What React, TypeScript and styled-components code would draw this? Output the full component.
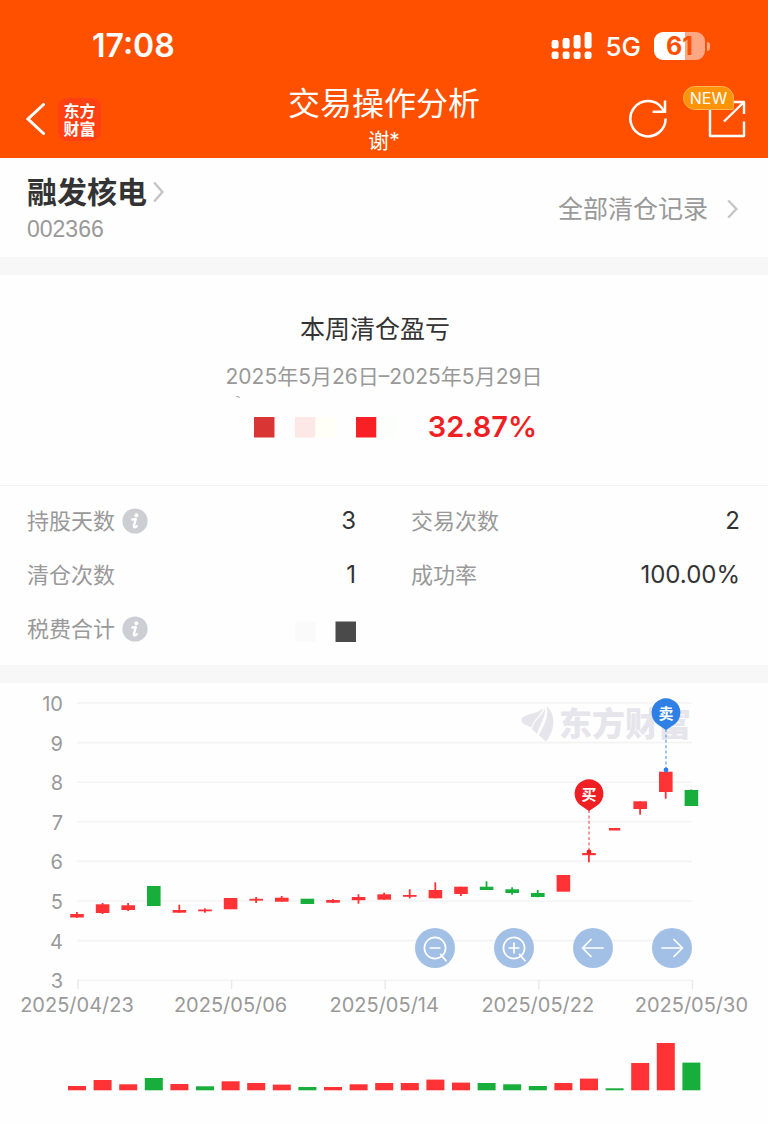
import React from "react";
import styled, { createGlobalStyle } from "styled-components";

const RED = "#ff3336";
const GREEN = "#17ae3c";
const ORANGE = "#ff5000";

const GlobalStyle = createGlobalStyle`
  *, *::before, *::after { box-sizing: border-box; }
  body {
    margin: 0;
    background: #fefefe;
    color: #333;
    font-family: Inter, "Noto Sans CJK SC", sans-serif;
  }
  button { border: 0; padding: 0; background: none; color: inherit; font: inherit; cursor: pointer; }
  a { color: inherit; text-decoration: none; }
  h1, h2, p, dl, dd, dt { margin: 0; font-weight: 400; }
  svg { display: block; }
`;

const Header = styled.header`
  background: ${ORANGE};
  color: #fff;
`;

const StatusBar = styled.div`
  display: flex;
  align-items: center;
  justify-content: space-between;
  height: 84px;
  padding: 8px 58px 0 92px;
`;

const Clock = styled.span`
  font-size: 32px;
  font-weight: 600;
  line-height: 40px;
`;

const StatusIcons = styled.div`
  display: flex;
  align-items: center;
`;

const Network = styled.span`
  margin: 2px 13px 0 13px;
  font-size: 26px;
  font-weight: 500;
  line-height: 32px;
`;

const Battery = styled.span`
  display: flex;
  align-items: center;
  justify-content: center;
  width: 51px;
  height: 28px;
  border-radius: 9px;
  background: linear-gradient(90deg, #fff 31px, #ffa683 31px);
  color: ${ORANGE};
  font-size: 25px;
  font-weight: 700;
  line-height: 28px;
`;

const BatteryCap = styled.span`
  width: 3px;
  height: 9px;
  margin-left: 2px;
  border-radius: 0 4px 4px 0;
  background: #ffa683;
`;

const NavBar = styled.nav`
  display: grid;
  grid-template-columns: 1fr auto 1fr;
  height: 74px;
`;

const NavSide = styled.div<{ $end?: boolean }>`
  display: flex;
  align-items: center;
  justify-content: ${(p) => (p.$end ? "flex-end" : "flex-start")};
  gap: ${(p) => (p.$end ? "40px" : "12px")};
  height: 70px;
  padding: ${(p) => (p.$end ? "0 22px 0 0" : "0 0 0 26px")};
`;

const Brand = styled.span`
  display: grid;
  place-content: center;
  width: 43px;
  height: 43px;
  border-radius: 9px;
  background: #ff4012;
  font-family: "Noto Sans CJK SC", sans-serif;
  font-size: 16px;
  font-weight: 700;
  line-height: 18px;
`;

const TitleBlock = styled.div`
  text-align: center;
`;

const Title = styled.h1`
  font-size: 32px;
  line-height: 40px;
`;

const Subtitle = styled.p`
  font-size: 21px;
  line-height: 34px;
`;

const ShareButton = styled.button`
  position: relative;
`;

const NewBadge = styled.span`
  position: absolute;
  left: -25px;
  top: -14px;
  width: 51px;
  height: 24px;
  border: 1px solid #ffb355;
  border-radius: 12px 12px 2px 12px;
  background: #ff9409;
  font-size: 16px;
  line-height: 22px;
  text-align: center;
`;

const StockBar = styled.section`
  display: flex;
  align-items: center;
  justify-content: space-between;
  height: 99px;
  padding: 2px 30px 0 27px;
`;

const StockName = styled.h2`
  font-size: 30px;
  line-height: 40px;
`;

const StockLink = styled.a`
  display: flex;
  align-items: center;
  gap: 6px;
  font-weight: 700;
`;

const StockCode = styled.p`
  color: #999;
  font-family: "Liberation Sans", sans-serif;
  font-size: 23px;
  line-height: 34px;
`;

const RecordsLink = styled.a`
  display: flex;
  align-items: center;
  gap: 19px;
  color: #999;
  font-size: 25px;
  line-height: 36px;
`;

const Band = styled.div`
  height: 18px;
  background: #f7f7f7;
`;

const Summary = styled.section`
  display: flex;
  flex-direction: column;
  align-items: center;
  height: 210px;
  padding-top: 36px;
`;

const SummaryTitle = styled.h2`
  padding-right: 18px;
  font-size: 25px;
  line-height: 36px;
`;

const Period = styled.p`
  margin-top: 12px;
  color: #999;
  font-size: 21px;
  line-height: 36px;
`;

const ProfitRow = styled.div`
  display: flex;
  align-items: center;
  height: 40px;
  margin-top: 12px;
  padding-left: 4px;
`;

const Percent = styled.strong`
  color: #f01f24;
  font-size: 29px;
  font-weight: 600;
  line-height: 40px;
`;

const Stats = styled.dl`
  display: grid;
  grid-template-columns: 1fr 1fr;
  padding: 8px 0 9px;
  border-top: 1px solid #f2f2f2;
`;

const Stat = styled.div`
  display: flex;
  align-items: center;
  justify-content: space-between;
  height: 54px;
  padding: 0 28px 0 27px;
`;

const StatLabel = styled.dt`
  display: flex;
  align-items: center;
  gap: 7px;
  color: #999;
  font-size: 22px;
  line-height: 32px;
`;

const StatValue = styled.dd`
  font-size: 24px;
  line-height: 32px;
`;

const ChartSection = styled.section`
  position: relative;
`;

const Chart = styled.svg`
  width: 100%;
  height: auto;
`;

const AxisText = styled.text`
  fill: #999;
  font-size: 20px;
`;

const WatermarkText = styled.text`
  fill: #e6e5eb;
  font-family: "Noto Sans CJK SC", sans-serif;
  font-size: 33px;
  font-weight: 900;
`;

const PinText = styled.text`
  fill: #fff;
  font-family: "Noto Sans CJK SC", sans-serif;
  font-size: 15px;
  font-weight: 700;
`;

const ChartControls = styled.div`
  position: absolute;
  top: 55.5%;
  right: 9.9%;
  display: flex;
  gap: 39px;
`;

const RoundButton = styled.button`
  display: grid;
  place-items: center;
  width: 40px;
  height: 40px;
  border-radius: 50%;
  background: rgba(152, 185, 226, 0.9);
`;

const Chevron = ({ height = 22 }: { height?: number }) => (
  <svg width="11" height={height} viewBox="0 0 11 22" preserveAspectRatio="none" fill="none" stroke="#c4c4c4" strokeWidth="2.4" aria-hidden="true">
    <path d="M1.2 1.5L9.4 11L1.2 20.5" />
  </svg>
);

const InfoIcon = () => (
  <svg width="26" height="26" viewBox="0 0 26 26" fill="none">
    <circle cx="13" cy="13" r="12.6" fill="#cdced4" />
    <circle cx="14.4" cy="7.2" r="2" fill="#fff" />
    <path d="M10.2 11.6L13.8 11L11.9 18Q11.6 20.4 14.8 18.2" stroke="#fff" strokeWidth="2.3" strokeLinejoin="round" strokeLinecap="round" />
  </svg>
);

const SignalIcon = () => (
  <svg width="41" height="28" viewBox="0 0 41 28" fill="#fff" aria-hidden="true">
    {[8, 6, 3, 0].map((top, i) => (
      <g key={top}>
        <rect x={i * 11 + 0.6} y={top} width="7" height={16.5 - top} rx="2.2" />
        <rect x={i * 11 + 0.6} y="19.6" width="7" height="7.4" rx="2.2" />
      </g>
    ))}
  </svg>
);

type Candle = { up: boolean; body: [number, number]; wick?: [number, number]; volume: number };

const candles: Candle[] = [
  { up: true, body: [231, 234.5], wick: [229, 235], volume: 4.3 },
  { up: true, body: [221.3, 230], wick: [220, 231], volume: 10.3 },
  { up: true, body: [222.3, 227], wick: [220, 228], volume: 6 },
  { up: false, body: [203, 223], volume: 12.3 },
  { up: true, body: [227, 229.7], wick: [221.7, 229.7], volume: 6.3 },
  { up: true, body: [226.5, 228.3], wick: [225.3, 229.7], volume: 4 },
  { up: true, body: [215, 226.3], volume: 9 },
  { up: true, body: [215.8, 217.6], wick: [214, 220], volume: 7.3 },
  { up: true, body: [214.7, 218.7], wick: [213, 218.7], volume: 5.7 },
  { up: false, body: [215.7, 221], volume: 3.3 },
  { up: true, body: [217, 219.7], wick: [216, 220], volume: 3.3 },
  { up: true, body: [214, 217.2], wick: [211.3, 220.7], volume: 6 },
  { up: true, body: [211.3, 216.7], wick: [209.7, 216.7], volume: 7.3 },
  { up: true, body: [212, 213.8], wick: [206.3, 215.3], volume: 7.3 },
  { up: true, body: [207, 215.3], wick: [199.3, 215.3], volume: 10.7 },
  { up: true, body: [203.7, 211], wick: [203.7, 213], volume: 7.7 },
  { up: false, body: [203.7, 207], wick: [198.3, 207], volume: 7.3 },
  { up: false, body: [206.3, 210], wick: [204.3, 211.7], volume: 6 },
  { up: false, body: [210, 214], wick: [207, 214.3], volume: 4.3 },
  { up: true, body: [192, 208.7], volume: 7.3 },
  { up: true, body: [170, 172.2], wick: [168, 179.3], volume: 11.7 },
  { up: true, body: [145, 147.5], volume: 2 },
  { up: true, body: [118.3, 126], wick: [118.3, 131.7], volume: 27.3 },
  { up: true, body: [88.7, 109], wick: [88.7, 115.7], volume: 47.3 },
  { up: false, body: [107, 123], wick: [106.4, 123], volume: 27.7 },
];

/* Trading days whose volume bar has the other colour than their candle. */
const fallingVolumeDays = [5, 21];

const FIRST_X = 77;
const STEP_X = 25.6;
const TOP_Y = 20;
const STEP_Y = 39.6;
const VOLUME_BASE = 407.3;

const dates: [string, number][] = [
  ["2025/04/23", 0],
  ["2025/05/06", 6],
  ["2025/05/14", 12],
  ["2025/05/22", 18],
  ["2025/05/30", 24],
];

const xOf = (i: number) => FIRST_X + STEP_X * i;

const Pin = ({ x, y, end, color, label }: { x: number; y: number; end: number; color: string; label: string }) => (
  <g>
    <line x1={x} x2={x} y1={y + 16} y2={end} stroke={color} strokeOpacity="0.75" strokeWidth="1.2" strokeDasharray="3 2.4" />
    <circle cx={x} cy={end} r="2.4" fill={color} />
    <path
      d={`M${x} ${y + 17}L${x - 7.5} ${y + 12}A14.4 14.4 0 1 1 ${x + 7.5} ${y + 12}Z`}
      fill={color}
    />
    <PinText x={x} y={y + 6} textAnchor="middle">{label}</PinText>
  </g>
);

const PriceChart = () => (
  <Chart viewBox="0 0 768 441" role="img" aria-label="股价走势">
    <g fill="#e6e5eb" transform="translate(520 23) scale(0.3333)">
      <path d="M5 36C26 20 52 24 70 6C64 30 42 36 34 64C20 58 0 54 5 36Z" />
      <path d="M75 6C78 34 58 56 52 84L36 70C40 42 66 34 75 6Z" />
      <path d="M80 0C94 14 101 28 100 52C99 74 89 92 78 107L57 88C66 62 88 44 80 0Z" />
    </g>
    <WatermarkText x="559" y="53">东方财富</WatermarkText>

    {[10, 9, 8, 7, 6, 5, 4, 3].map((price, i) => {
      const y = TOP_Y + STEP_Y * i;
      return (
        <g key={price}>
          <line x1="77" x2="692" y1={y} y2={y} stroke="#f3f3f3" strokeWidth="1.6" />
          <AxisText x="63" y={y + 8} textAnchor="end">{price}</AxisText>
        </g>
      );
    })}

    {dates.map(([date, i]) => (
      <g key={date}>
        <line x1={xOf(i) + 1} x2={xOf(i) + 1} y1="297" y2="306" stroke="#e9e9e9" strokeWidth="1.4" />
        <AxisText x={xOf(i)} y="329" textAnchor="middle">{date}</AxisText>
      </g>
    ))}

    {candles.map(({ up, body, wick, volume }, i) => {
      const half = i === 21 ? 5.7 : 6.8;
      return (
        <g key={i} fill={up ? RED : GREEN}>
          {wick && <rect x={xOf(i) - 1} y={wick[0]} width="1.8" height={wick[1] - wick[0]} />}
          <rect x={xOf(i) - half} y={body[0]} width={half * 2} height={body[1] - body[0]} />
          <rect
            x={xOf(i) - 9}
            y={VOLUME_BASE - volume}
            width="18"
            height={volume}
            fill={fallingVolumeDays.includes(i) ? GREEN : undefined}
          />
        </g>
      );
    })}

    <Pin x={589} y={111} end={169} color="#f01f24" label="买" />
    <Pin x={666} y={30} end={87} color="#2f80e4" label="卖" />
  </Chart>
);

const ControlIcon = ({ children }: { children: React.ReactNode }) => (
  <svg width="40" height="40" viewBox="0 0 40 40" fill="none" stroke="#fff" strokeWidth="1.7" strokeLinecap="round" strokeLinejoin="round">
    {children}
  </svg>
);

const Lens = () => (
  <>
    <circle cx="20" cy="20" r="10.6" />
    <path d="M25.6 26.4L31 32.8M15.2 20H24.8" />
  </>
);

export default function App() {
  return (
    <>
      <GlobalStyle />
      <Header>
        <StatusBar>
          <Clock>17:08</Clock>
          <StatusIcons>
            <SignalIcon />
            <Network>5G</Network>
            <Battery>61</Battery>
            <BatteryCap />
          </StatusIcons>
        </StatusBar>
        <NavBar>
          <NavSide>
            <button aria-label="返回">
              <svg width="20" height="32" viewBox="0 0 20 32" fill="none" stroke="#fff" strokeWidth="3" strokeLinecap="round">
                <path d="M17.5 1.5L2 16L17.5 30.5" />
              </svg>
            </button>
            <Brand>
              <span>东方</span>
              <span>财富</span>
            </Brand>
          </NavSide>
          <TitleBlock>
            <Title>交易操作分析</Title>
            <Subtitle>谢*</Subtitle>
          </TitleBlock>
          <NavSide $end>
            <button aria-label="刷新">
              <svg width="40" height="40" viewBox="0 0 40 40" fill="none" stroke="#fff" strokeWidth="2.5">
                <path d="M37.6 19.5A17.6 17.6 0 1 1 34.4 9.6L36.4 12.4" />
                <path d="M37 1.6V12.8H24.6" />
              </svg>
            </button>
            <ShareButton aria-label="分享">
              <svg width="38" height="38" viewBox="0 0 38 38" fill="none" stroke="#fff" strokeWidth="2.4" strokeLinejoin="round">
                <path d="M2 8V36H36V21.5" />
                <path d="M24 2H36V14M36 2L16 21.5" />
              </svg>
              <NewBadge>NEW</NewBadge>
            </ShareButton>
          </NavSide>
        </NavBar>
      </Header>

      <main>
        <StockBar>
          <div>
            <StockName>
              <StockLink href="#stock">
                融发核电
                <Chevron />
              </StockLink>
            </StockName>
            <StockCode>002366</StockCode>
          </div>
          <RecordsLink href="#records">
            全部清仓记录
            <Chevron height={20} />
          </RecordsLink>
        </StockBar>
        <Band />

        <Summary>
          <SummaryTitle>本周清仓盈亏</SummaryTitle>
          <Period>2025年5月26日–2025年5月29日</Period>
          <ProfitRow>
            <svg width="193" height="64" viewBox="0 0 193 64" aria-hidden="true">
              <path d="M0 1L5 3L4 1.5Z" fill="#888" />
              <rect x="19" y="22" width="20.5" height="20.5" fill="#da3535" />
              <rect x="60" y="22" width="20.5" height="20.5" fill="#fde8e8" />
              <rect x="80.5" y="22" width="20.5" height="20.5" fill="#fffef7" />
              <rect x="121" y="22" width="20.5" height="20.5" fill="#f92025" />
              <rect x="141.5" y="22" width="20.5" height="20.5" fill="#fbfefb" />
            </svg>
            <Percent>32.87%</Percent>
          </ProfitRow>
        </Summary>

        <Stats>
          <Stat>
            <StatLabel>
              持股天数
              <button aria-label="持股天数说明"><InfoIcon /></button>
            </StatLabel>
            <StatValue>3</StatValue>
          </Stat>
          <Stat>
            <StatLabel>交易次数</StatLabel>
            <StatValue>2</StatValue>
          </Stat>
          <Stat>
            <StatLabel>清仓次数</StatLabel>
            <StatValue>1</StatValue>
          </Stat>
          <Stat>
            <StatLabel>成功率</StatLabel>
            <StatValue>100.00%</StatValue>
          </Stat>
          <Stat>
            <StatLabel>
              税费合计
              <button aria-label="税费合计说明"><InfoIcon /></button>
            </StatLabel>
            <StatValue>
              <svg width="61" height="26" viewBox="0 0 61 26" aria-hidden="true">
                <rect x="0" y="5.5" width="20.5" height="20.5" fill="#fafafa" />
                <rect x="40.5" y="5.5" width="20.5" height="20.5" fill="#4a4a4a" />
              </svg>
            </StatValue>
          </Stat>
        </Stats>
        <Band />

        <ChartSection>
          <PriceChart />
          <ChartControls>
            <RoundButton aria-label="缩小">
              <ControlIcon><Lens /></ControlIcon>
            </RoundButton>
            <RoundButton aria-label="放大">
              <ControlIcon>
                <Lens />
                <path d="M20 15.2V24.8" />
              </ControlIcon>
            </RoundButton>
            <RoundButton aria-label="向左">
              <ControlIcon><path d="M30 20H10M18 11.5L9.5 20L18 28.5" /></ControlIcon>
            </RoundButton>
            <RoundButton aria-label="向右">
              <ControlIcon><path d="M10 20H30M22 11.5L30.5 20L22 28.5" /></ControlIcon>
            </RoundButton>
          </ChartControls>
        </ChartSection>
      </main>
    </>
  );
}
